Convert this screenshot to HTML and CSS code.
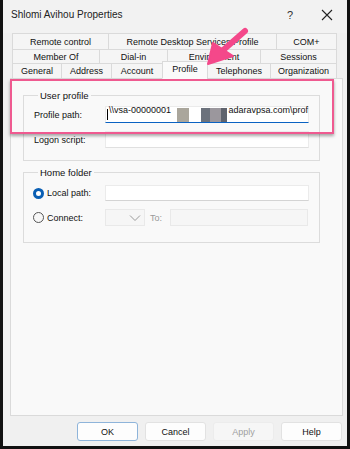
FILE: index.html
```html
<!DOCTYPE html>
<html>
<head>
  <link rel="stylesheet" href="styles.css">
</head>
<body>
  <div class="window">
    <div class="titlebar">
      <span class="title">Shlomi Avihou Properties</span>
      <span class="help-btn">?</span>
      <span class="close-btn">
        <svg width="12" height="12" viewBox="0 0 12 12"><path d="M1 1 L11 11 M11 1 L1 11" stroke="#222" stroke-width="1.1" fill="none"/></svg>
      </span>
    </div>

    <div class="tabs">
      <div class="tab-row row-top">
        <div class="tab" style="flex-basis:96px">Remote control</div>
        <div class="tab" style="flex-basis:168px">Remote Desktop Services Profile</div>
        <div class="tab" style="flex-basis:61px">COM+</div>
      </div>
      <div class="tab-row row-mid">
        <div class="tab" style="flex-basis:87px">Member Of</div>
        <div class="tab" style="flex-basis:68px">Dial-in</div>
        <div class="tab" style="flex-basis:93px">Environment</div>
        <div class="tab" style="flex-basis:77px">Sessions</div>
      </div>
      <div class="tab-row row-front">
        <div class="tab" style="flex-basis:49px">General</div>
        <div class="tab" style="flex-basis:50px">Address</div>
        <div class="tab" style="flex-basis:51px">Account</div>
        <div class="tab selected" style="flex-basis:45px">Profile</div>
        <div class="tab" style="flex-basis:63px">Telephones</div>
        <div class="tab" style="flex-basis:67px">Organization</div>
      </div>
    </div>

    <div class="panel">
      <fieldset class="group">
        <legend>User profile</legend>
        <div class="field-row">
          <span class="field-label">Profile path:</span>
          <div class="textbox focused">
            <span class="caret"></span>\\vsa-00000001
            <span class="redact r1"></span><span class="redact r-gap"></span><span class="redact r2"></span><span class="redact r3"></span><span class="redact r4"></span>adaravpsa.com\prof
          </div>
        </div>
        <div class="field-row">
          <span class="field-label">Logon script:</span>
          <div class="textbox"></div>
        </div>
      </fieldset>

      <fieldset class="group home">
        <legend>Home folder</legend>
        <div class="field-row short">
          <span class="field-label radio-label"><span class="radio checked"></span>Local path:</span>
          <div class="textbox plain"></div>
        </div>
        <div class="field-row">
          <span class="field-label radio-label"><span class="radio"></span>Connect:</span>
          <div class="combo disabled">
            <svg width="12" height="8" viewBox="0 0 12 8"><path d="M1 1.5 L6 6.5 L11 1.5" stroke="#9a9a9a" stroke-width="1" fill="none"/></svg>
          </div>
          <span class="to-label">To:</span>
          <div class="textbox disabled to-box"></div>
        </div>
      </fieldset>
    </div>

    <div class="footer">
      <button class="btn default">OK</button>
      <button class="btn">Cancel</button>
      <button class="btn disabled">Apply</button>
      <button class="btn">Help</button>
    </div>
  </div>

  <div class="highlight"></div>
  <svg class="arrow" width="350" height="449" viewBox="0 0 350 449">
    <line x1="245" y1="31" x2="221" y2="52" stroke="#f4488a" stroke-width="6" stroke-linecap="round"/>
    <polygon points="208,64 213,43 233,56" fill="#f4488a" stroke="#f4488a" stroke-width="2" stroke-linejoin="round"/>
  </svg>
</body>
</html>
```

FILE: styles.css
```css
* {
  box-sizing: border-box;
}

html, body {
  margin: 0;
  width: 350px;
  height: 449px;
  overflow: hidden;
}

body {
  background: #111;
  position: relative;
  font-family: "Liberation Sans", Arial, sans-serif;
  font-size: 9px;
  color: #1a1a1a;
}

.window {
  margin: 0 3px 0 3px;
  width: 344px;
  height: 446px;
  background: #f0f0f0;
  display: flex;
  flex-direction: column;
}

.titlebar {
  height: 33px;
  display: flex;
  align-items: flex-start;
  padding: 9px 0 0 8px;
  background: #f2f2f2;
}

.title {
  font-size: 10px;
  color: #222;
  flex: 1;
}

.help-btn {
  font-size: 11px;
  color: #333;
  margin-right: 28px;
}

.close-btn {
  margin-right: 14px;
}

.tabs {
  margin: 0 6px 0 9px;
  display: flex;
  flex-direction: column;
}

.tab-row {
  display: flex;
  width: 325px;
}

.row-top { height: 16px; }
.row-mid { height: 14px; }
.row-front { height: 16px; }

.tab {
  flex-grow: 0;
  flex-shrink: 0;
  display: flex;
  align-items: center;
  justify-content: center;
  background: #f5f5f5;
  border: 1px solid #dadada;
  border-right: none;
  border-bottom: none;
  white-space: nowrap;
  color: #111;
}

.tab:last-child {
  border-right: 1px solid #dadada;
}

.row-front .tab {
  border-bottom: 1px solid #dadada;
}

.tab.selected {
  background: #fafafa;
  border-bottom-color: #fafafa;
  margin-top: -2px;
  height: 18px;
  padding-bottom: 2px;
  position: relative;
  z-index: 1;
}

.panel {
  flex: 1;
  margin: -1px 4px 0 7px;
  background: #f9f9f9;
  border: 1px solid #dadada;
  padding: 11px 0 0 12px;
}

.group {
  margin: 0;
  width: 297px;
  border: 1px solid #dcdcdc;
  padding: 5px 0 12px 10px;
  display: flex;
  flex-direction: column;
  gap: 8px;
}

.group.home {
  margin-top: 6px;
  padding-top: 7px;
  padding-bottom: 16px;
}

legend {
  padding: 0 2px;
  margin-left: 4px;
  font-size: 9.5px;
  color: #111;
}

.field-row {
  display: flex;
  align-items: center;
  height: 17px;
}

.field-row.short {
  height: 16px;
}

.field-label {
  width: 71px;
  flex-shrink: 0;
  color: #111;
}

.radio-label {
  display: flex;
  align-items: center;
  margin-left: -1px;
  width: 72px;
}

.radio {
  width: 11px;
  height: 11px;
  border-radius: 50%;
  border: 1px solid #555;
  background: #f7f7f7;
  margin-right: 3px;
}

.radio.checked {
  border: 3px solid #0a5fb4;
  background: #fff;
}

.textbox {
  width: 204px;
  height: 17px;
  background: #fff;
  border: 1px solid #ebebeb;
  border-bottom-color: #e0e0e0;
  display: flex;
  align-items: center;
  padding-left: 1px;
  white-space: pre;
  color: #111;
  font-size: 9px;
}

.textbox.focused {
  border-bottom: 1px solid #0a62c2;
}

.textbox.plain {
  height: 16px;
  border-bottom-color: #d4d4d4;
}

.caret {
  width: 1px;
  height: 11px;
  background: #000;
  margin-right: 1px;
}

.redact {
  height: 14px;
  display: inline-block;
}

.r1 { width: 12px; background: #aaa69c; margin-left: 6px; }
.r-gap { width: 12px; background: #fff; }
.r2 { width: 9px; background: #6c727c; }
.r3 { width: 11px; background: #9b979d; }
.r4 { width: 7px; background: #5f636d; margin-right: 1px; }

.textbox.disabled,
.combo.disabled {
  background: #f6f6f6;
  border: 1px solid #e9e9e9;
}

.combo {
  width: 40px;
  height: 17px;
  display: flex;
  align-items: center;
  justify-content: flex-end;
  padding-right: 3px;
}

.to-label {
  color: #9a9a9a;
  margin-left: 5px;
  width: 20px;
}

.to-box {
  width: 138px;
}

.footer {
  height: 30px;
  display: flex;
  justify-content: flex-end;
  gap: 7px;
  padding: 6px 5px 0 0;
}

.btn {
  width: 61px;
  height: 19px;
  padding: 0;
  background: #fdfdfd;
  border: 1px solid #e2e2e2;
  border-radius: 3px;
  font-family: "Liberation Sans", Arial, sans-serif;
  font-size: 9px;
  color: #111;
}

.btn.default {
  border-color: #8eb4da;
}

.btn.disabled {
  background: #f6f6f6;
  color: #a0a0a0;
  border-color: #ececec;
}

.highlight {
  position: absolute;
  left: 10px;
  top: 79px;
  width: 324px;
  height: 55px;
  border: 2px solid #ef5a90;
  box-shadow: 0 2px 3px rgba(0, 0, 0, 0.35);
}

.arrow {
  position: absolute;
  left: 0;
  top: 0;
  pointer-events: none;
}
```
